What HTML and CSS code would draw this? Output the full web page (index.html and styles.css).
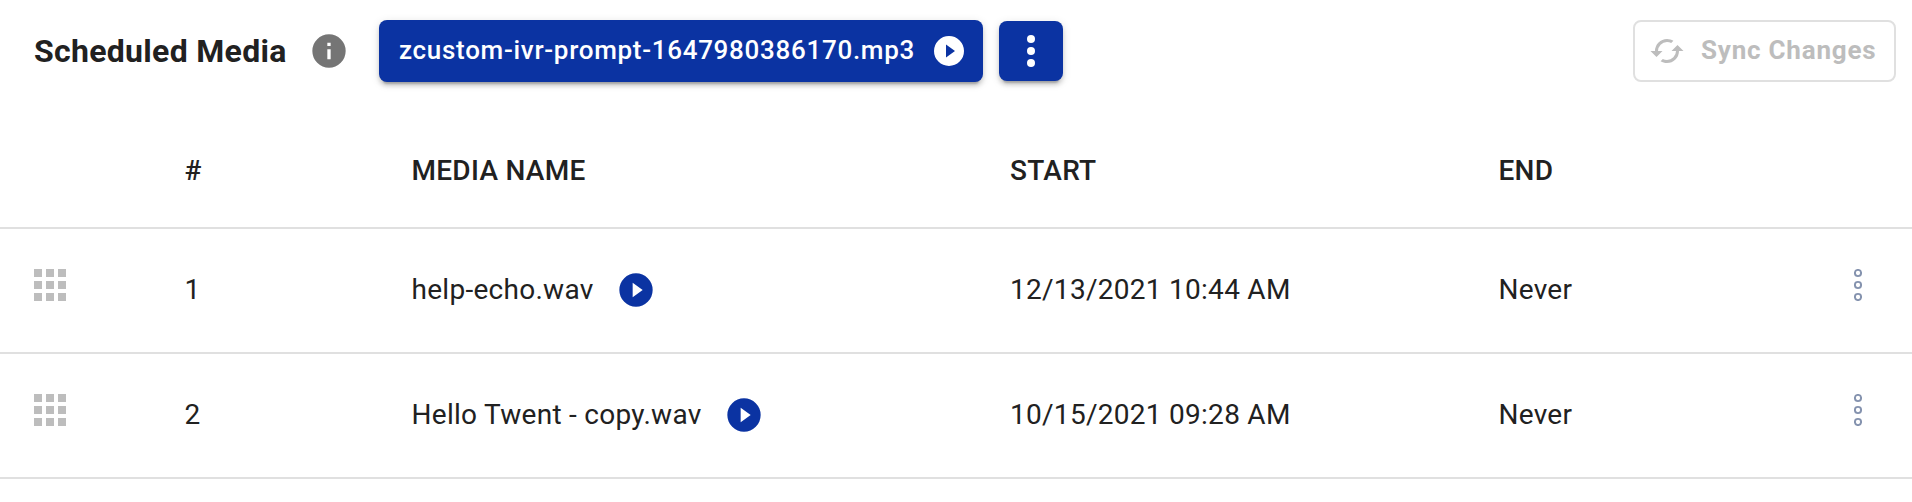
FILE: index.html
```html
<!DOCTYPE html>
<html lang="en">
<head>
<meta charset="utf-8">
<title>Scheduled Media</title>
<link rel="stylesheet" href="styles.css">
</head>
<body>
<svg class="sprite" width="0" height="0" aria-hidden="true">
  <symbol id="play" viewBox="0 0 24 24"><path d="M10 16.4V7.6L16 12M12 2A10 10 0 0 0 2 12A10 10 0 0 0 12 22A10 10 0 0 0 22 12A10 10 0 0 0 12 2Z"/></symbol>
  <symbol id="grip" viewBox="0 0 32 32"><path d="M0 0h8v8H0zM12 0h8v8h-8zM24 0h8v8h-8zM0 12h8v8H0zM12 12h8v8h-8zM24 12h8v8h-8zM0 24h8v8H0zM12 24h8v8h-8zM24 24h8v8h-8z"/></symbol>
  <symbol id="dots" viewBox="0 0 8 32"><circle cx="4" cy="4" r="3.1"/><circle cx="4" cy="16" r="3.1"/><circle cx="4" cy="28" r="3.1"/></symbol>
</svg>
<header class="toolbar">
  <h1 class="title">Scheduled Media</h1>
  <svg class="info" viewBox="0 0 24 24"><path d="M13 9h-2V7h2m0 10h-2v-6h2m-1-9A10 10 0 0 0 2 12a10 10 0 0 0 10 10 10 10 0 0 0 10-10A10 10 0 0 0 12 2z"/></svg>
  <button class="btn media"><span>zcustom-ivr-prompt-1647980386170.mp3</span><svg class="media-play"><use href="#play"/></svg></button>
  <button class="btn more"><svg viewBox="0 0 8 32"><circle cx="4" cy="4" r="4"/><circle cx="4" cy="16" r="4"/><circle cx="4" cy="28" r="4"/></svg></button>
  <button class="sync" disabled><svg viewBox="0 0 24 24"><path d="M19,8L15,12H18A6,6 0 0,1 12,18C11,18 10.03,17.75 9.2,17.3L7.74,18.76C8.97,19.54 10.43,20 12,20A8,8 0 0,0 20,12H23M6,12A6,6 0 0,1 12,6C13,6 13.97,6.25 14.8,6.7L16.26,5.24C15.03,4.46 13.57,4 12,4A8,8 0 0,0 4,12H1L5,16L9,12"/></svg><span>Sync Changes</span></button>
</header>
<main class="table">
  <div class="row head"><span></span><span>#</span><span>MEDIA NAME</span><span>START</span><span>END</span><span></span></div>
  <div class="row">
    <svg class="grip"><use href="#grip"/></svg><span>1</span>
    <span class="name"><span>help-echo.wav</span><svg class="play"><use href="#play"/></svg></span>
    <span>12/13/2021 10:44 AM</span><span>Never</span>
    <svg class="dots"><use href="#dots"/></svg>
  </div>
  <div class="row">
    <svg class="grip"><use href="#grip"/></svg><span>2</span>
    <span class="name"><span>Hello Twent - copy.wav</span><svg class="play"><use href="#play"/></svg></span>
    <span>10/15/2021 09:28 AM</span><span>Never</span>
    <svg class="dots"><use href="#dots"/></svg>
  </div>
</main>
</body>
</html>
```

FILE: styles.css
```css
* { box-sizing: border-box; }
body {
  margin: 0;
  background: #fff;
  color: #212121;
  font-family: Roboto, "Liberation Sans", sans-serif;
  overflow: hidden;
}
svg { display: block; flex: none; fill: currentColor; }
.sprite { position: absolute; }
.toolbar {
  display: flex;
  align-items: center;
  height: 102px;
  padding: 0 16px 0 34px;
}
.title {
  width: 275px;
  margin: 0;
  font-size: 32px;
  line-height: 40px;
  font-weight: 700;
  letter-spacing: 0.3px;
  white-space: nowrap;
}
.info { width: 40px; height: 40px; color: #757575; }
button {
  display: flex;
  align-items: center;
  flex: none;
  font-family: inherit;
  font-size: 26px;
  border: 0;
  border-radius: 8px;
  padding: 0;
  white-space: nowrap;
}
button span { padding-bottom: 2px; }
.btn {
  background: #0b33a2;
  color: #fff;
  box-shadow: 0 6px 2px -4px rgba(0,0,0,.2), 0 4px 4px 0 rgba(0,0,0,.14), 0 2px 10px 0 rgba(0,0,0,.12);
}
.media {
  width: 604px;
  height: 62px;
  margin-left: 30px;
  padding: 0 16px 0 20px;
  justify-content: space-between;
  font-weight: 500;
  letter-spacing: 0.7px;
}
.media-play { width: 36px; height: 36px; }
.more { width: 64px; height: 60px; margin-left: 16px; justify-content: center; }
.more svg { width: 8px; height: 32px; }
.sync {
  width: 263px;
  height: 62px;
  margin-left: auto;
  padding: 0 0 0 14px;
  gap: 16px;
  background: #fff;
  border: 2px solid #e0e0e0;
  color: #bdbdbd;
  font-weight: 700;
  letter-spacing: 0.78px;
}
.sync svg { width: 36px; height: 36px; }
.row {
  display: grid;
  grid-template-columns: 150.5px 227px 598.5px 488.5px 355.5px 1fr;
  align-items: center;
  height: 125px;
  padding-left: 34px;
  padding-bottom: 2px;
  border-bottom: 2px solid #e0e0e0;
  font-size: 28px;
  line-height: 40px;
  letter-spacing: 0.28px;
}
.head { height: 127px; padding-top: 13px; padding-bottom: 0; font-weight: 500; }
.name { display: flex; align-items: center; gap: 22.5px; }
.play { width: 40px; height: 40px; color: #0b33a2; }
.grip { width: 32px; height: 32px; margin-bottom: 9px; color: #bdbdbd; }
.dots { width: 8px; height: 32px; margin-bottom: 10px; justify-self: start; fill: none; stroke: #8492ae; stroke-width: 1.9; }
```
